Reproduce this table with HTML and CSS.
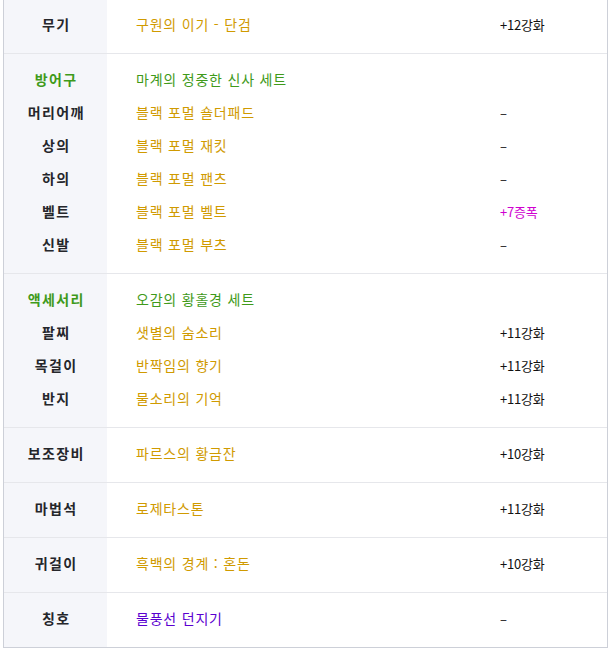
FILE: index.html
```html
<!DOCTYPE html>
<html lang="ko">
<head>
<meta charset="utf-8">
<link rel="stylesheet" href="styles.css">
</head>
<body>
<div class="table">
  <div class="group first">
    <div class="col label"><div class="ln">무기</div></div>
    <div class="col name"><div class="ln gold">구원의 이기 - 단검</div></div>
    <div class="col val"><div class="ln">+12강화</div></div>
  </div>
  <div class="group">
    <div class="col label">
      <div class="ln green">방어구</div>
      <div class="ln">머리어깨</div>
      <div class="ln">상의</div>
      <div class="ln">하의</div>
      <div class="ln">벨트</div>
      <div class="ln">신발</div>
    </div>
    <div class="col name">
      <div class="ln green">마계의 정중한 신사 세트</div>
      <div class="ln gold">블랙 포멀 숄더패드</div>
      <div class="ln gold">블랙 포멀 재킷</div>
      <div class="ln gold">블랙 포멀 팬츠</div>
      <div class="ln gold">블랙 포멀 벨트</div>
      <div class="ln gold">블랙 포멀 부츠</div>
    </div>
    <div class="col val">
      <div class="ln">&nbsp;</div>
      <div class="ln">–</div>
      <div class="ln">–</div>
      <div class="ln">–</div>
      <div class="ln magenta">+7증폭</div>
      <div class="ln">–</div>
    </div>
  </div>
  <div class="group">
    <div class="col label">
      <div class="ln green">액세서리</div>
      <div class="ln">팔찌</div>
      <div class="ln">목걸이</div>
      <div class="ln">반지</div>
    </div>
    <div class="col name">
      <div class="ln green">오감의 황홀경 세트</div>
      <div class="ln gold">샛별의 숨소리</div>
      <div class="ln gold">반짝임의 향기</div>
      <div class="ln gold">물소리의 기억</div>
    </div>
    <div class="col val">
      <div class="ln">&nbsp;</div>
      <div class="ln">+11강화</div>
      <div class="ln">+11강화</div>
      <div class="ln">+11강화</div>
    </div>
  </div>
  <div class="group">
    <div class="col label"><div class="ln">보조장비</div></div>
    <div class="col name"><div class="ln gold">파르스의 황금잔</div></div>
    <div class="col val"><div class="ln">+10강화</div></div>
  </div>
  <div class="group">
    <div class="col label"><div class="ln">마법석</div></div>
    <div class="col name"><div class="ln gold">로제타스톤</div></div>
    <div class="col val"><div class="ln">+11강화</div></div>
  </div>
  <div class="group">
    <div class="col label"><div class="ln">귀걸이</div></div>
    <div class="col name"><div class="ln gold">흑백의 경계 : 혼돈</div></div>
    <div class="col val"><div class="ln">+10강화</div></div>
  </div>
  <div class="group last">
    <div class="col label"><div class="ln">칭호</div></div>
    <div class="col name"><div class="ln purple">물풍선 던지기</div></div>
    <div class="col val"><div class="ln">–</div></div>
  </div>
</div>
</body>
</html>
```
FILE: styles.css
```css
html, body {
  margin: 0;
  padding: 0;
  background: #ffffff;
}
body {
  font-family: "Noto Sans CJK KR", "Noto Sans", sans-serif;
  font-size: 14px;
  color: #222222;
}
.table {
  margin-left: 3px;
  width: 603px;
  border-left: 1px solid #cdd0d8;
  border-right: 1px solid #cdd0d8;
  border-bottom: 1px solid #cdd0d8;
}
.group {
  display: flex;
  border-bottom: 1px solid #e6e7eb;
}
.group.first {
  margin-top: -1px;
}
.group.last {
  border-bottom: none;
}
.col {
  padding: 9px 0 12px;
}
.ln {
  height: 33px;
  line-height: 33px;
  white-space: nowrap;
}
.label {
  width: 103px;
  background: #f5f6fa;
  text-align: center;
  font-weight: bold;
  color: #25262b;
  letter-spacing: 1.4px;
  text-indent: 1.4px;
}
.name {
  width: 364px;
  padding-left: 29px;
  letter-spacing: 0.8px;
}
.val {
  flex: 1;
  color: #111111;
  font-size: 13px;
  letter-spacing: -0.2px;
}
.gold { color: #d09a00; }
.green { color: #3f9a1a; }
.label .green { color: #3f9a1a; }
.purple { color: #5a00d0; }
.magenta { color: #d000d0; }
```
